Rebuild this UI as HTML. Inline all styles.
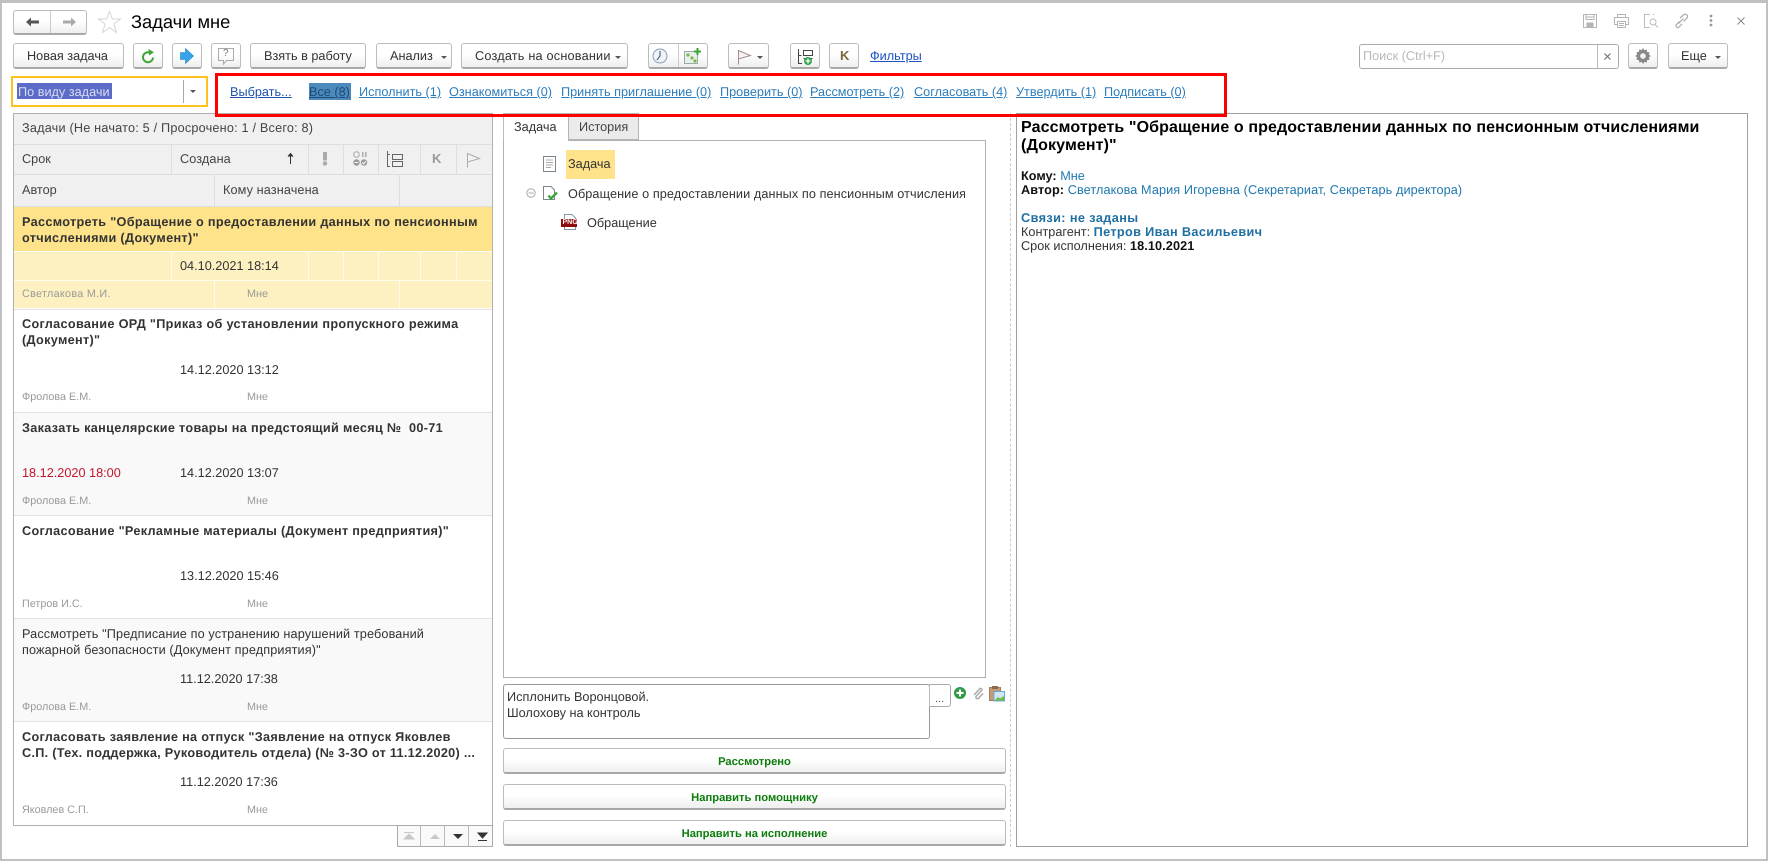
<!DOCTYPE html>
<html lang="ru"><head><meta charset="utf-8"><title>Задачи мне</title>
<style>
html,body{margin:0;padding:0}
body{width:1768px;height:861px;position:relative;overflow:hidden;background:#fff;font-family:"Liberation Sans",Arial,sans-serif;font-size:12.7px;color:#333;text-rendering:geometricPrecision}
div,span,a,svg{position:absolute;box-sizing:border-box}
.t{white-space:nowrap;line-height:16px;height:16px}
.b{font-weight:bold;letter-spacing:.31px}
.btn{border:1px solid #bcbcbc;border-bottom:2px solid #a8a8a8;border-radius:3px;background:linear-gradient(#fff 45%,#eee);top:43px;height:26px}
.gb{border:1px solid #bcbcbc;border-bottom:2px solid #a8a8a8;border-radius:3px;background:linear-gradient(#fff 45%,#efefef);left:503px;width:503px;height:26px;text-align:center;color:#0b7d0b;font-weight:bold;font-size:11.2px;line-height:26px}
.l{color:#2d7dbb;text-decoration:underline;top:84px}
.h{background:#f0f0f0}
.n{font-size:10.8px;color:#999}
.ln{background:#e3e3e3;height:1px;left:14px;width:478px}
.arr{width:0;height:0;border-left:3px solid transparent;border-right:3px solid transparent;border-top:3px solid #555}
</style></head><body>
<!-- outer frame -->
<div style="left:0;top:0;width:1768px;height:861px;border:2px solid #c0c0c0;border-top-width:3px"></div>

<!-- nav -->
<div class="btn" style="left:13px;top:10px;width:74px;height:25px"></div>
<div style="left:50px;top:11px;width:1px;height:22px;background:#ccc"></div>
<svg style="left:25px;top:16px" width="16" height="12"><path d="M1 6L6 1.5V4.5H14V7.5H6V10.5Z" fill="#555"/></svg>
<svg style="left:61px;top:16px" width="16" height="12"><path d="M15 6L10 1.5V4.5H2V7.5H10V10.5Z" fill="#aaa"/></svg>
<svg style="left:97px;top:10px" width="25" height="24"><path d="M12.5 1.5L15.4 9H23.5L17 14L19.5 22.5L12.5 17.5L5.5 22.5L8 14L1.5 9H9.6Z" fill="#fff" stroke="#d6d6d6" stroke-width="1"/></svg>
<div class="t" style="left:131px;top:12px;font-size:18.3px;line-height:20px;height:20px;color:#000">Задачи мне</div>

<!-- right header icons -->
<svg style="left:1582px;top:13px" width="16" height="16" fill="none" stroke="#b5b5b5"><path d="M1.5 1.5H14.5V14.5H1.5Z"/><path d="M4 1.5V6.5H12V1.5M4 4H12"/><path d="M5 10H11V14.5H5Z" fill="#b5b5b5"/></svg>
<svg style="left:1613px;top:13px" width="17" height="16" fill="none" stroke="#b5b5b5"><path d="M4.5 4.5V1.5H12.5V4.5M4.5 11.5H1.5V4.5H15.5V11.5H12.5"/><path d="M4.5 8.5H12.5V14.5H4.5ZM6 10.5H11M6 12.5H11"/></svg>
<svg style="left:1643px;top:13px" width="16" height="16" fill="none" stroke="#bbb"><path d="M7 1.5H1.5V14.5H7M10 1.5H11"/><circle cx="10" cy="9" r="3"/><path d="M12 11.5L15 14.5"/></svg>
<svg style="left:1673px;top:13px" width="16" height="16" fill="none" stroke="#aaa" stroke-width="1.2"><path d="M6.5 8.5L3 12a2 2 0 0 0 2.5 2.5L9 11M7 5L10.5 2A2.2 2.2 0 0 1 14 5L10.5 8.5M5.5 10.5L10.5 5.5"/></svg>
<svg style="left:1709px;top:14px" width="4" height="13" fill="#999"><circle cx="2" cy="2" r="1.4"/><circle cx="2" cy="6.5" r="1.4"/><circle cx="2" cy="11" r="1.4"/></svg>
<svg style="left:1737px;top:17px" width="8" height="8" stroke="#888" stroke-width="1"><path d="M.5 .5L7.5 7.5M7.5 .5L.5 7.5"/></svg>

<!-- toolbar -->
<div class="btn" style="left:13px;width:111px"></div><div class="t" style="left:27px;top:48px">Новая задача</div>
<div class="btn" style="left:133px;width:30px"></div>
<svg style="left:141px;top:48px" width="14" height="16" fill="none"><path d="M12 9.5A5 5 0 1 1 8.8 4.6" stroke="#3fa535" stroke-width="2"/><path d="M7.5 1L13 4.2 8 7.5Z" fill="#3fa535"/></svg>
<div class="btn" style="left:172px;width:30px"></div>
<svg style="left:180px;top:48px" width="14" height="16"><path d="M.5 4.5H5.5V.5L13.5 8L5.5 15.5V11.5H.5Z" fill="#35a4e8" stroke="#2b85c0" stroke-width=".6"/></svg>
<div class="btn" style="left:211px;width:30px"></div>
<svg style="left:218px;top:48px" width="16" height="18" fill="none"><path d="M.5 .5H15.5V12.5H8.5L5.5 16V12.5H.5Z" stroke="#aaa"/></svg>
<div class="t" style="left:223px;top:46px;font-size:10px;color:#777">?</div>
<div class="btn" style="left:250px;width:116px"></div><div class="t" style="left:264px;top:48px">Взять в работу</div>
<div class="btn" style="left:376px;width:76px"></div><div class="t" style="left:390px;top:48px">Анализ</div><div class="arr" style="left:441px;top:56px"></div>
<div class="btn" style="left:461px;width:167px"></div><div class="t" style="left:475px;top:48px;letter-spacing:.2px">Создать на основании</div><div class="arr" style="left:615px;top:56px"></div>
<div class="btn" style="left:648px;width:60px"></div><div style="left:678px;top:44px;width:1px;height:23px;background:#ccc"></div>
<svg style="left:652px;top:48px" width="16" height="16"><circle cx="8" cy="8" r="7" fill="#eef3f9" stroke="#8a9bb0"/><path d="M8 3V8L5 12" stroke="#445" fill="none"/></svg>
<svg style="left:684px;top:48px" width="17" height="16"><rect x=".5" y="3.5" width="13" height="12" fill="#e9efe9" stroke="#9aa"/><circle cx="4" cy="7" r="1.6" fill="#7ab648"/><circle cx="8" cy="10" r="1.6" fill="#7ab648"/><circle cx="11" cy="13" r="1.6" fill="#7ab648"/><path d="M10 3.5H17M13.5 0V7" stroke="#3ba635" stroke-width="2"/></svg>
<div class="btn" style="left:728px;width:41px"></div>
<svg style="left:737px;top:49px" width="15" height="16" stroke="#a58f8f"><path d="M1.5 1.5L13.5 6.5L1.5 10Z" fill="#f6f1f1"/><path d="M1.5 1V15.5" fill="none"/></svg><div class="arr" style="left:757px;top:56px"></div>
<div class="btn" style="left:790px;width:30px"></div>
<svg style="left:797px;top:49px" width="17" height="16" fill="none" stroke="#444"><path d="M1.5 0V14.5H5M1.5 6.5H4.5"/><rect x="6.5" y="1.5" width="9" height="5"/><path d="M6.5 9.5H15.5"/><circle cx="11" cy="12" r="4" fill="#2ea44a" stroke="none"/><path d="M8.5 12H13.5M11 9.5V14.5" stroke="#fff" stroke-width="1.3"/></svg>
<div class="btn" style="left:829px;width:30px"></div>
<div class="t" style="left:840px;top:48px;color:#7a6638;font-size:13px;font-weight:bold">K</div>
<a class="t" style="left:870px;top:48px;color:#1d52c0;text-decoration:underline">Фильтры</a>

<!-- search -->
<div style="left:1359px;top:44px;width:260px;height:25px;border:1px solid #aaa;border-radius:3px;background:#fff"></div>
<div style="left:1597px;top:45px;width:1px;height:23px;background:#bbb"></div>
<div class="t" style="left:1363px;top:48px;color:#b9b9b9">Поиск (Ctrl+F)</div>
<svg style="left:1604px;top:53px" width="7" height="7" stroke="#666"><path d="M.5 .5L6.5 6.5M6.5 .5L.5 6.5"/></svg>
<div class="btn" style="left:1628px;width:30px"></div>
<svg style="left:1635px;top:48px" width="16" height="16" fill="#888"><path d="M8 0l1.3 2.2 2.4-.7.4 2.5 2.5.4-.7 2.4L16 8l-2.1 1.3.7 2.4-2.5.4-.4 2.5-2.4-.7L8 16l-1.3-2.1-2.4.7-.4-2.5-2.5-.4.7-2.4L0 8l2.1-1.3-.7-2.4 2.5-.4.4-2.5 2.4.7Z"/><circle cx="8" cy="8" r="2.8" fill="#f4f4f4"/></svg>
<div class="btn" style="left:1668px;width:60px"></div><div class="t" style="left:1681px;top:48px">Еще</div><div class="arr" style="left:1715px;top:56px"></div>

<!-- combobox -->
<div style="left:11px;top:76px;width:197px;height:31px;border:2px solid #fcc21f;background:#fff"></div>
<div style="left:17px;top:83px;width:95px;height:16px;background:#5b6cc8"></div>
<div class="t" style="left:18px;top:84px;color:#d8daf0">По виду задачи</div>
<div style="left:183px;top:80px;width:1px;height:23px;background:#aaa"></div>
<div class="arr" style="left:190px;top:90px"></div>

<!-- links -->
<a class="t l" style="left:230px;color:#1d52b0">Выбрать...</a>
<div style="left:309px;top:83px;width:42px;height:17px;background:#4c8abc"></div>
<a class="t l" style="left:309px;color:#1c4a7a">Все (8)</a>
<a class="t l" style="left:359px">Исполнить (1)</a>
<a class="t l" style="left:449px">Ознакомиться (0)</a>
<a class="t l" style="left:561px">Принять приглашение (0)</a>
<a class="t l" style="left:720px">Проверить (0)</a>
<a class="t l" style="left:810px">Рассмотреть (2)</a>
<a class="t l" style="left:914px">Согласовать (4)</a>
<a class="t l" style="left:1016px">Утвердить (1)</a>
<a class="t l" style="left:1104px">Подписать (0)</a>

<!-- left panel -->
<div style="left:13px;top:113px;width:480px;height:713px;border:1px solid #b0b0b0"></div>
<div class="h" style="left:14px;top:114px;width:478px;height:30px"></div>
<div class="t" style="left:22px;top:120px;color:#444;letter-spacing:.19px">Задачи (Не начато: 5 / Просрочено: 1 / Всего: 8)</div>
<div style="left:14px;top:144px;width:478px;height:63px;background:#dedede"></div>
<div class="h" style="left:14px;top:145px;width:157px;height:29px"></div>
<div class="h" style="left:172px;top:145px;width:136px;height:29px"></div>
<div class="h" style="left:309px;top:145px;width:34px;height:29px"></div>
<div class="h" style="left:344px;top:145px;width:34px;height:29px"></div>
<div class="h" style="left:379px;top:145px;width:41px;height:29px"></div>
<div class="h" style="left:421px;top:145px;width:35px;height:29px"></div>
<div class="h" style="left:457px;top:145px;width:35px;height:29px"></div>
<div class="h" style="left:14px;top:175px;width:200px;height:31px"></div>
<div class="h" style="left:215px;top:175px;width:184px;height:31px"></div>
<div class="h" style="left:400px;top:175px;width:92px;height:31px"></div>
<div class="t" style="left:22px;top:151px;color:#444">Срок</div>
<div class="t" style="left:180px;top:151px;color:#444;letter-spacing:.1px">Создана</div>
<svg style="left:287px;top:153px" width="7" height="11" stroke="#333" fill="#333"><path d="M3.5 11V1M1 3.5L3.5 .5 6 3.5"/></svg>
<svg style="left:322px;top:152px" width="6" height="15" fill="#aaa"><path d="M1 0H5V8.5H1Z"/><circle cx="3" cy="11.5" r="2.2"/></svg>
<svg style="left:353px;top:151px" width="15" height="16" fill="#999"><circle cx="3.5" cy="3.5" r="2.8" fill="none" stroke="#aaa"/><path d="M9 1H10.5V6H9ZM12 1H13.5V6H12Z" fill="#aaa"/><circle cx="3.5" cy="11.5" r="3.2"/><path d="M1.5 11.5H5.5" stroke="#fff"/><circle cx="11" cy="11.5" r="3.2"/><path d="M9.3 11.5L10.6 13L12.8 10.3" stroke="#fff" fill="none"/></svg>
<svg style="left:387px;top:151px" width="17" height="16" fill="none" stroke="#666"><path d="M.5 0V15.5H3M.5 3.5H3"/><rect x="5.5" y="3.5" width="10" height="5"/><rect x="5.5" y="10.5" width="10" height="5"/></svg>
<div class="t" style="left:432px;top:151px;color:#999;font-size:13px;font-weight:bold">K</div>
<svg style="left:466px;top:152px" width="15" height="16" stroke="#aaa"><path d="M1.5 1.5L13.5 6.5L1.5 10Z" fill="#f6f1f1"/><path d="M1.5 1V15.5" fill="none"/></svg>
<div class="t" style="left:22px;top:182px;color:#444">Автор</div>
<div class="t" style="left:223px;top:182px;color:#444;letter-spacing:.1px">Кому назначена</div>

<!-- item 1 -->
<div style="left:14px;top:207px;width:478px;height:44px;background:#fee38b"></div>
<div style="left:14px;top:252px;width:478px;height:56px;background:#fdf1c1"></div>
<div style="left:14px;top:280px;width:478px;height:1px;background:#fffbe9"></div>
<div style="left:171px;top:252px;width:1px;height:28px;background:#fffbe9"></div>
<div style="left:308px;top:252px;width:1px;height:28px;background:#fffbe9"></div>
<div style="left:343px;top:252px;width:1px;height:28px;background:#fffbe9"></div>
<div style="left:378px;top:252px;width:1px;height:28px;background:#fffbe9"></div>
<div style="left:420px;top:252px;width:1px;height:28px;background:#fffbe9"></div>
<div style="left:456px;top:252px;width:1px;height:28px;background:#fffbe9"></div>
<div style="left:214px;top:281px;width:1px;height:27px;background:#fffbe9"></div>
<div style="left:399px;top:281px;width:1px;height:27px;background:#fffbe9"></div>
<div class="t b" style="left:22px;top:214px">Рассмотреть "Обращение о предоставлении данных по пенсионным</div>
<div class="t b" style="left:22px;top:230px">отчислениями (Документ)"</div>
<div class="t" style="left:180px;top:258px">04.10.2021 18:14</div>
<div class="t n" style="left:22px;top:286px;letter-spacing:.3px">Светлакова М.И.</div>
<div class="t n" style="left:247px;top:286px">Мне</div>

<!-- item 2 -->
<div class="ln" style="top:309px"></div>
<div class="t b" style="left:22px;top:316px">Согласование ОРД "Приказ об установлении пропускного режима</div>
<div class="t b" style="left:22px;top:332px">(Документ)"</div>
<div class="t" style="left:180px;top:362px">14.12.2020 13:12</div>
<div class="t n" style="left:22px;top:389px">Фролова Е.М.</div>
<div class="t n" style="left:247px;top:389px">Мне</div>

<!-- item 3 -->
<div style="left:14px;top:412px;width:478px;height:103px;background:#f9f9f9;border-top:1px solid #e3e3e3"></div>
<div class="t b" style="left:22px;top:420px">Заказать канцелярские товары на предстоящий месяц №&nbsp; 00-71</div>
<div class="t" style="left:22px;top:465px;color:#c0162c">18.12.2020 18:00</div>
<div class="t" style="left:180px;top:465px">14.12.2020 13:07</div>
<div class="t n" style="left:22px;top:493px">Фролова Е.М.</div>
<div class="t n" style="left:247px;top:493px">Мне</div>

<!-- item 4 -->
<div class="ln" style="top:515px"></div>
<div class="t b" style="left:22px;top:523px">Согласование "Рекламные материалы (Документ предприятия)"</div>
<div class="t" style="left:180px;top:568px">13.12.2020 15:46</div>
<div class="t n" style="left:22px;top:596px">Петров И.С.</div>
<div class="t n" style="left:247px;top:596px">Мне</div>

<!-- item 5 -->
<div style="left:14px;top:618px;width:478px;height:103px;background:#f9f9f9;border-top:1px solid #e3e3e3"></div>
<div class="t" style="left:22px;top:626px;letter-spacing:.12px">Рассмотреть "Предписание по устранению нарушений требований</div>
<div class="t" style="left:22px;top:642px;letter-spacing:.12px">пожарной безопасности (Документ предприятия)"</div>
<div class="t" style="left:180px;top:671px">11.12.2020 17:38</div>
<div class="t n" style="left:22px;top:699px">Фролова Е.М.</div>
<div class="t n" style="left:247px;top:699px">Мне</div>

<!-- item 6 -->
<div class="ln" style="top:721px"></div>
<div class="t b" style="left:22px;top:729px">Согласовать заявление на отпуск "Заявление на отпуск Яковлев</div>
<div class="t b" style="left:22px;top:745px;letter-spacing:.28px">С.П. (Тех. поддержка, Руководитель отдела) (№ 3-ЗО от 11.12.2020) ...</div>
<div class="t" style="left:180px;top:774px">11.12.2020 17:36</div>
<div class="t n" style="left:22px;top:802px">Яковлев С.П.</div>
<div class="t n" style="left:247px;top:802px">Мне</div>

<!-- pager -->
<div style="left:397px;top:825px;width:96px;height:22px;border:1px solid #aaa;background:#f9f9f9"></div>
<div style="left:420px;top:826px;width:1px;height:20px;background:#bbb"></div>
<div style="left:444px;top:826px;width:1px;height:20px;background:#bbb"></div>
<div style="left:468px;top:826px;width:1px;height:20px;background:#bbb"></div>
<svg style="left:403px;top:832px" width="88" height="10"><path d="M1 7L6 2L11 7ZM1 .5H11" fill="#c8c8c8" stroke="#c8c8c8"/><path d="M27 7L32 2L37 7Z" fill="#c8c8c8"/><path d="M50 2H60L55 7Z" fill="#333"/><path d="M75 1H84L79.5 6Z M75 8.5H84" fill="#333" stroke="#333"/></svg>

<!-- tabs & tree -->
<div style="left:503px;top:140px;width:483px;height:538px;border:1px solid #b0b0b0"></div>
<div style="left:503px;top:113px;width:66px;height:28px;border:1px solid #bbb;border-bottom:0;background:#fff"></div>
<div style="left:568px;top:113px;width:71px;height:27px;border:1px solid #b5b5b5;background:#ebebeb"></div>
<div class="t" style="left:514px;top:119px">Задача</div>
<div class="t" style="left:579px;top:119px;color:#444">История</div>
<svg style="left:543px;top:156px" width="13" height="16" fill="#fff" stroke="#7a8790"><path d="M.5 .5H12.5V15.5H.5Z"/><path d="M3 4H10M3 6.5H10M3 9H10M3 11.5H8" stroke="#aaa" fill="none"/></svg>
<div style="left:566px;top:150px;width:49px;height:29px;background:#fee38b"></div>
<div class="t" style="left:568px;top:156px">Задача</div>
<svg style="left:526px;top:188px" width="10" height="10" fill="none" stroke="#aaa"><circle cx="5" cy="5" r="4.2"/><path d="M2.5 5H7.5"/></svg>
<svg style="left:543px;top:186px" width="15" height="15"><path d="M.5 .5H8L11.5 4V13.5H.5Z" fill="#fff" stroke="#7a8790"/><path d="M5.5 9.5L8 12.5L14 6.5" fill="none" stroke="#3ba53b" stroke-width="2.4"/></svg>
<div style="left:568px;top:185px;width:397px;height:17px;overflow:hidden"><div class="t" style="left:0;top:1px;letter-spacing:.08px">Обращение о предоставлении данных по пенсионным отчислениями</div></div>
<svg style="left:561px;top:214px" width="17" height="17"><path d="M3.5 .5H11L14.5 4V15.5H3.5Z" fill="#fff" stroke="#8a98a5"/><rect x="0" y="5" width="16" height="8" fill="#8e0b0b"/></svg>
<div style="left:562.5px;top:219px;font-weight:bold;font-size:7px;line-height:8px;color:#fff;white-space:nowrap">PNG</div>
<div class="t" style="left:587px;top:215px">Обращение</div>

<!-- comment -->
<div style="left:503px;top:684px;width:427px;height:55px;border:1px solid #999;border-radius:3px"></div>
<div style="left:929px;top:684px;width:22px;height:23px;border:1px solid #aaa;border-left-color:#bbb;border-radius:0 3px 3px 0;background:#fff"></div>
<div class="t" style="left:935px;top:692px;color:#555;font-size:11px;line-height:14px">...</div>
<div class="t" style="left:507px;top:689px">Исплонить Воронцовой.</div>
<div class="t" style="left:507px;top:705px">Шолохову на контроль</div>
<svg style="left:954px;top:687px" width="12" height="12"><circle cx="6" cy="6" r="6" fill="#2f9a45"/><path d="M2.5 6H9.5M6 2.5V9.5" stroke="#fff" stroke-width="2"/></svg>
<svg style="left:972px;top:687px" width="12" height="13" fill="none" stroke="#aaa" stroke-width="1.5"><path d="M10 3L4 9.5A1.6 1.6 0 0 0 6.3 11.5L11 6.5M10 3A1.5 1.5 0 0 0 8 1.5L2 8"/></svg>
<svg style="left:989px;top:686px" width="16" height="16"><rect x=".5" y="1.5" width="11" height="13" fill="#c49a78" stroke="#a57c5c"/><rect x="3" y="0" width="6" height="3" fill="#8a6a50"/><rect x="5" y="5.5" width="10.5" height="9.5" fill="#cfe6f7" stroke="#6fa5cf"/><path d="M5.5 14.5L9 11L11 12.5L15 10V14.5Z" fill="#6fbf4a"/></svg>

<!-- action buttons -->
<div class="gb" style="top:748px">Рассмотрено</div>
<div class="gb" style="top:784px">Направить помощнику</div>
<div class="gb" style="top:820px">Направить на исполнение</div>

<!-- splitter -->
<div style="left:1010px;top:113px;width:0;height:734px;border-left:1px dashed #ccc"></div>

<!-- right panel -->
<div style="left:1016px;top:113px;width:732px;height:734px;border:1px solid #a0a0a0"></div>
<div class="t" style="left:1021px;top:118px;font-weight:bold;font-size:16px;letter-spacing:.11px;line-height:19px;height:19px;color:#000">Рассмотреть "Обращение о предоставлении данных по пенсионным отчислениями</div>
<div class="t" style="left:1021px;top:136px;font-weight:bold;font-size:16px;letter-spacing:.11px;line-height:19px;height:19px;color:#000">(Документ)"</div>
<div class="t" style="left:1021px;top:168px"><b style="color:#111">Кому:</b> <span style="position:static;color:#1f78ae">Мне</span></div>
<div class="t" style="left:1021px;top:182px;letter-spacing:.09px"><b style="color:#111">Автор:</b> <span style="position:static;color:#1f78ae">Светлакова Мария Игоревна (Секретариат, Секретарь директора)</span></div>
<div class="t" style="left:1021px;top:210px;color:#1f6fa3;font-weight:bold;letter-spacing:.4px">Связи: не заданы</div>
<div class="t" style="left:1021px;top:224px">Контрагент: <b style="color:#1f6fa3;letter-spacing:.35px">Петров Иван Васильевич</b></div>
<div class="t" style="left:1021px;top:238px">Срок исполнения: <b style="color:#111;letter-spacing:.1px">18.10.2021</b></div>

<!-- red highlight -->
<div style="left:215px;top:73px;width:1012px;height:44px;border:3px solid #f00"></div>
</body></html>
